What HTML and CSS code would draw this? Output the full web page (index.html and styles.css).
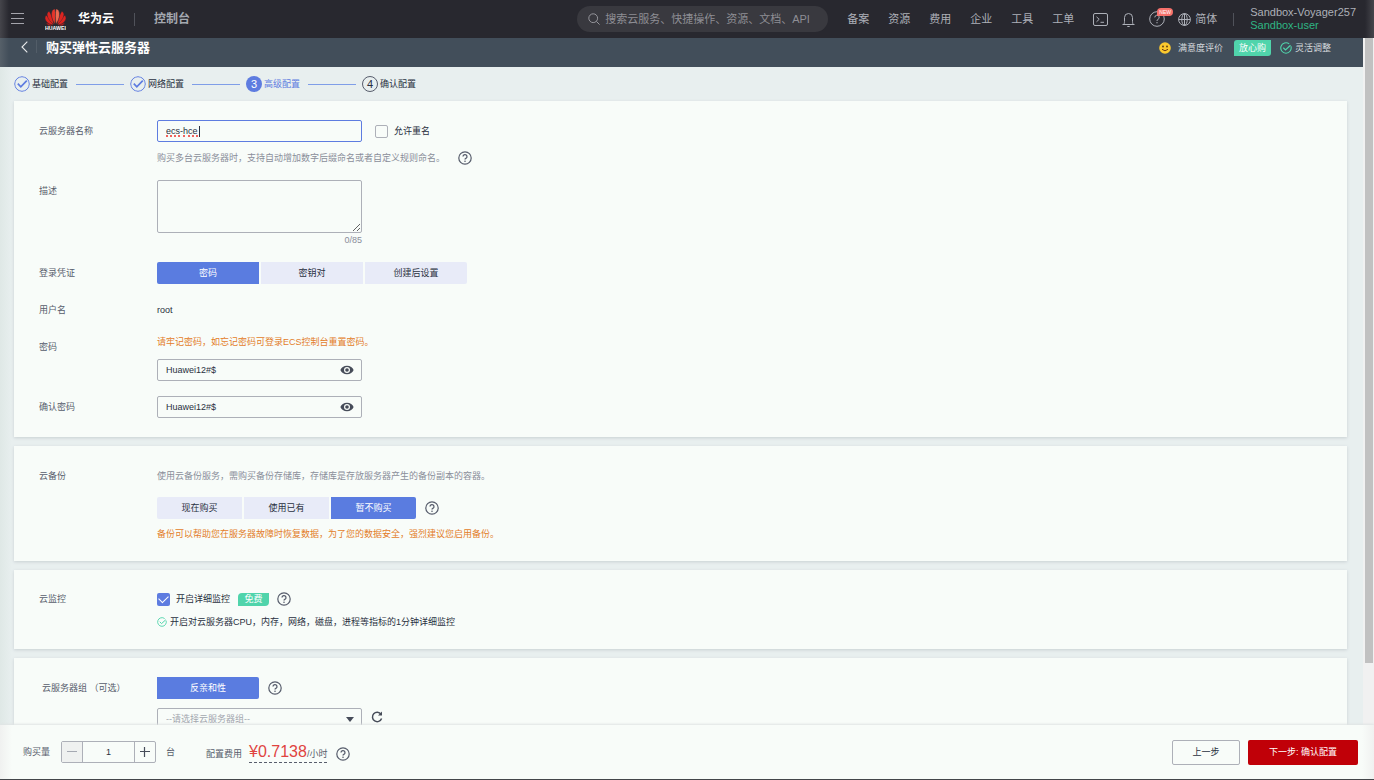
FILE: index.html
```html
<!DOCTYPE html>
<html lang="zh-CN">
<head>
<meta charset="utf-8">
<title>购买弹性云服务器</title>
<link rel="stylesheet" href="styles.css">
</head>
<body>
<svg class="defs" aria-hidden="true">
  <symbol id="help" viewBox="0 0 14 14"><circle cx="7" cy="7" r="6.2" fill="none" stroke="currentColor" stroke-width="1.2"/><path d="M5 5.6a2 2 0 1 1 2.9 1.8c-.7.35-.9.6-.9 1.2" fill="none" stroke="currentColor" stroke-width="1.3"/><circle cx="7" cy="10.3" r=".8" fill="currentColor"/></symbol>
  <symbol id="eye" viewBox="0 0 14 10"><path d="M7 .8C3.800.8 1.300 2.600.4 5c.9 2.400 3.400 4.200 6.600 4.200S12.700 7.400 13.600 5C12.700 2.600 10.200.8 7 .8z" fill="currentColor"/><circle cx="7" cy="5" r="3" fill="#f8fcf9"/><circle cx="7" cy="5" r="1.800" fill="currentColor"/></symbol>
  <symbol id="done" viewBox="0 0 16 16"><circle cx="8" cy="8" r="7.300" fill="none" stroke="currentColor" stroke-width="1"/><path d="M3.800 7.600l3 3.200 6-6.200" fill="none" stroke="currentColor" stroke-width="1.700"/></symbol>
  <symbol id="okay" viewBox="0 0 12 12"><path d="M10.900 4.300A5.200 5.200 0 1 1 9.200 1.900" fill="none" stroke="currentColor" stroke-width="1.100"/><path d="M3.300 5.800l2.200 2.100 5-4.600" fill="none" stroke="currentColor" stroke-width="1.200"/></symbol>
</svg>

<header class="topbar">
  <button class="icon-btn" aria-label="菜单"><svg width="13" height="12" viewBox="0 0 13 12"><path d="M0 .5h13M0 5.500h13M0 10.500h13" stroke="#a4a4ac"/></svg></button>
  <a class="brand" href="#">
    <svg class="logo" viewBox="0 0 40 44" role="img" aria-label="HUAWEI">
      <g fill="#dc2420" stroke="#28282f" stroke-width=".8">
        <path d="M14 33c-4 2-10 1-12-5 4 1 9 3 12 5zM26 33c4 2 10 1 12-5-4 1-9 3-12 5z" fill="#b81d1c"/>
        <path d="M16 32C10 33 1 27 0 20c0-3 1-5 2-6 5 4 11 11 14 18z"/>
        <path d="M24 32c6 1 15-5 16-12 0-3-1-5-2-6-5 4-11 11-14 18z"/>
        <path d="M17 31C12 29 4 20 4 12c0-3 2-5 4-6 4 6 7 16 9 25z"/>
        <path d="M23 31c5-2 13-11 13-19 0-3-2-5-4-6-4 6-7 16-9 25z"/>
        <path d="M19 31C14 24 10 12 14 5c2-3 4-3 5-3 2 8 1 20 0 29z" fill="#e4352a"/>
        <path d="M21 31c5-7 9-19 5-26-2-3-4-3-5-3-2 8-1 20 0 29z" fill="#ee6a50"/>
      </g>
      <text x="20" y="43" text-anchor="middle" class="logo-word">HUAWEI</text>
    </svg>
    <strong>华为云</strong>
  </a>
  <i class="bar"></i>
  <a class="console" href="#">控制台</a>
  <div class="tools">
    <label class="search">
      <svg width="12" height="12" viewBox="0 0 12 12" fill="none" stroke="#96969c"><circle cx="5.200" cy="5.200" r="4.400"/><path d="M8.400 8.400l3.200 3.200"/></svg>
      <input type="text" aria-label="搜索" placeholder="搜索云服务、快捷操作、资源、文档、API">
    </label>
    <nav class="nav"><a href="#">备案</a><a href="#">资源</a><a href="#">费用</a><a href="#">企业</a><a href="#">工具</a><a href="#">工单</a></nav>
    <div class="icons">
      <button class="icon-btn" aria-label="终端"><svg width="15" height="13" viewBox="0 0 15 13" fill="none" stroke="currentColor"><rect x=".5" y=".5" width="14" height="12" rx="1.500"/><path d="M3.500 3.800l2.700 2.500-2.700 2.500M7.500 9.300h3.500"/></svg></button>
      <button class="icon-btn" aria-label="通知"><svg width="13" height="15" viewBox="0 0 13 15" fill="none" stroke="currentColor"><path d="M.5 12.500h12M1.800 12.500c.7-1.200.7-2.500.7-4.500V5.500a4 4 0 0 1 8 0V8c0 2 0 3.300.7 4.500M5.300 14.500h2.400"/></svg></button>
      <button class="icon-btn help-new" aria-label="帮助"><svg width="16" height="16" viewBox="0 0 16 16" fill="none" stroke="currentColor"><circle cx="8" cy="8" r="7.300"/><path d="M5.800 6.400a2.200 2.200 0 1 1 3.200 2c-.8.4-1 .7-1 1.500M8 11v1.300"/></svg><span class="new">NEW</span></button>
    </div>
    <button class="icon-btn lang"><svg width="13" height="13" viewBox="0 0 13 13" fill="none" stroke="currentColor"><circle cx="6.500" cy="6.500" r="5.900"/><ellipse cx="6.500" cy="6.500" rx="2.700" ry="5.900"/><path d="M.6 6.500h11.800M6.500.6v11.800"/></svg>简体</button>
    <i class="bar"></i>
    <div class="account"><span>Sandbox-Voyager257</span><span class="user">Sandbox-user</span></div>
  </div>
</header>

<div class="viewport">
  <main class="page">
    <div class="titlebar">
      <button class="icon-btn back" aria-label="返回"><svg width="7" height="12" viewBox="0 0 7 12"><path d="M6.300.7L1 6l5.300 5.300" fill="none" stroke="#e8eaec" stroke-width="1.100"/></svg></button>
      <h1>购买弹性云服务器</h1>
      <div class="promos">
        <a href="#"><svg width="12" height="12" viewBox="0 0 12 12"><circle cx="6" cy="6" r="5.800" fill="#fbc92e"/><circle cx="4" cy="4.500" r=".9" fill="#5a3a10"/><circle cx="8" cy="4.500" r=".9" fill="#5a3a10"/><path d="M3 7.300q3 3 6 0" fill="none" stroke="#6b3a12"/></svg>满意度评价</a>
        <span class="tag">放心购</span>
        <span class="flex-tip"><svg width="12" height="12"><use href="#okay"/></svg>灵活调整</span>
      </div>
    </div>

    <ol class="steps">
      <li><svg class="dot" aria-hidden="true"><use href="#done"/></svg><span class="step-name">基础配置</span><i class="line"></i></li>
      <li><svg class="dot" aria-hidden="true"><use href="#done"/></svg><span class="step-name">网络配置</span><i class="line"></i></li>
      <li class="current"><b class="dot">3</b><span class="step-name">高级配置</span><i class="line"></i></li>
      <li class="todo"><b class="dot">4</b><span class="step-name">确认配置</span></li>
    </ol>

    <form class="cards">
      <section class="card basic">
        <div class="row name-row">
          <label class="label" for="name">云服务器名称</label>
          <div>
            <div class="inline">
              <div class="field"><input class="focused" id="name" type="text" value="ecs-hce"><i class="squiggle"></i><i class="squiggle second"></i><i class="caret"></i></div>
              <label class="check"><input type="checkbox">允许重名</label>
            </div>
            <p class="hint spaced">购买多台云服务器时，支持自动增加数字后缀命名或者自定义规则命名。<svg class="help"><use href="#help"/></svg></p>
          </div>
        </div>
        <div class="row desc-row">
          <label class="label" for="desc">描述</label>
          <div class="desc"><textarea id="desc"></textarea><span class="count">0/85</span></div>
        </div>
        <div class="row">
          <span class="label">登录凭证</span>
          <div class="segments"><button type="button" class="on">密码</button><button type="button">密钥对</button><button type="button">创建后设置</button></div>
        </div>
        <div class="row user-row"><span class="label">用户名</span><span class="value">root</span></div>
        <div class="row pwd-row">
          <label class="label" for="pwd">密码</label>
          <div>
            <p class="warn">请牢记密码，如忘记密码可登录ECS控制台重置密码。</p>
            <div class="field"><input id="pwd" type="text" value="Huawei12#$"><button type="button" class="eye" aria-label="显示密码"><svg width="14" height="10"><use href="#eye"/></svg></button></div>
          </div>
        </div>
        <div class="row">
          <label class="label" for="pwd2">确认密码</label>
          <div class="field"><input id="pwd2" type="text" value="Huawei12#$"><button type="button" class="eye" aria-label="显示密码"><svg width="14" height="10"><use href="#eye"/></svg></button></div>
        </div>
      </section>

      <section class="card backup">
        <div class="row">
          <span class="label short">云备份</span>
          <div>
            <p class="hint">使用云备份服务，需购买备份存储库，存储库是存放服务器产生的备份副本的容器。</p>
            <div class="inline tight">
              <div class="segments small"><button type="button">现在购买</button><button type="button">使用已有</button><button type="button" class="on">暂不购买</button></div>
              <svg class="help"><use href="#help"/></svg>
            </div>
            <p class="warn">备份可以帮助您在服务器故障时恢复数据，为了您的数据安全，强烈建议您启用备份。</p>
          </div>
        </div>
      </section>

      <section class="card monitor">
        <div class="row">
          <span class="label short">云监控</span>
          <div>
            <div class="inline monitor-line">
              <label class="check"><input type="checkbox" checked>开启详细监控</label>
              <span class="free">免费</span>
              <svg class="help"><use href="#help"/></svg>
            </div>
            <p class="benefit"><svg width="10" height="10"><use href="#okay"/></svg>开启对云服务器CPU，内存，网络，磁盘，进程等指标的1分钟详细监控</p>
          </div>
        </div>
      </section>

      <section class="card group">
        <div class="row">
          <label class="label optional" for="group">云服务器组 （可选）</label>
          <div>
            <div class="inline tight"><div class="segments"><button type="button" class="on">反亲和性</button></div><svg class="help"><use href="#help"/></svg></div>
            <div class="inline tight select-line">
              <div class="field"><select id="group"><option>--请选择云服务器组--</option></select><svg class="arrow" viewBox="0 0 8 5"><path d="M0 0h8L4 5z" fill="#464c59"/></svg></div>
              <button type="button" class="icon-btn" aria-label="刷新"><svg width="12" height="12" viewBox="0 0 12 12"><path d="M10 3.200A4.700 4.700 0 1 0 10.600 7.500" fill="none" stroke="#464c59" stroke-width="1.500"/><path d="M11 .5v4H7z" fill="#464c59"/></svg></button>
            </div>
          </div>
        </div>
      </section>
    </form>
  </main>
  <div class="scroll"><div class="thumb"></div></div>
</div>

<footer class="footer">
  <label for="qty">购买量</label>
  <div class="qty">
    <button class="minus" aria-label="减少"><svg width="12" height="12" viewBox="0 0 12 12"><path d="M1 5.500h10" stroke="#a5a9b2"/></svg></button>
    <input id="qty" type="text" value="1">
    <button aria-label="增加"><svg width="12" height="12" viewBox="0 0 12 12"><path d="M1 5.500h10M5.500 1v10" stroke="#464c59" stroke-width="1.200"/></svg></button>
  </div>
  <span>台</span>
  <span class="fee">配置费用</span>
  <span class="price"><b>¥0.7138</b>/小时</span>
  <svg class="help"><use href="#help"/></svg>
  <button class="prev">上一步</button>
  <button class="next">下一步: 确认配置</button>
</footer>
</body>
</html>
```
FILE: styles.css
```css
* { box-sizing: border-box; }

body {
  margin: 0;
  height: 100vh;
  display: flex;
  flex-direction: column;
  overflow: hidden;
  background: #e8efef;
  color: #293040;
  font: 9px/16px "Liberation Sans", "Noto Sans CJK SC", sans-serif;
}

button, input, textarea, select { font: inherit; color: inherit; margin: 0; }
button { padding: 0; border: 0; cursor: pointer; }
a { color: inherit; text-decoration: none; }
p { margin: 0; }
svg { flex: none; }
.defs { position: absolute; width: 0; height: 0; }
.icon-btn { display: flex; align-items: center; background: none; }

/* Top bar */
.topbar {
  flex: none;
  height: 38px;
  display: flex;
  align-items: center;
  padding: 0 18px 0 11px;
  background: linear-gradient(90deg, #45454b, #28282f 9px, #28282f calc(100% - 9px), #45454b);
  color: #adb0b8;
  font-size: 11px;
}
.brand { display: flex; align-items: center; gap: 12px; margin-left: 21px; color: #fff; font-size: 12px; }
.logo { width: 21px; height: 23px; }
.logo-word { font: bold 10px "Liberation Sans", sans-serif; fill: #fff; }
.bar { width: 1px; height: 13px; background: #50525a; }
.brand + .bar { margin: 0 19px 0 20px; }
.console { font-size: 12px; font-weight: bold; color: #a4a8b0; }
.tools { margin-left: auto; display: flex; align-items: center; }
.search {
  width: 251px;
  height: 26px;
  display: flex;
  align-items: center;
  gap: 5px;
  padding: 0 11px;
  border-radius: 13px;
  background: #39393f;
}
.search input { flex: 1; min-width: 0; padding: 0; border: 0; background: none; }
.search input::placeholder { color: #8e8e94; opacity: 1; }
.nav { display: flex; gap: 19px; margin-left: 19px; }
.icons { display: flex; align-items: center; gap: 14px; margin-left: 19px; }
.help-new { position: relative; }
.new {
  position: absolute;
  left: 8px;
  top: -3px;
  width: 16px;
  border-radius: 4px 4px 4px 0;
  background: #f5706b;
  color: #fff;
  font-size: 5px;
  line-height: 8px;
}
.lang { gap: 4px; margin-left: 13px; }
.lang + .bar { margin: 0 16px; }
.account { display: flex; flex-direction: column; line-height: 13px; }
.user { color: #2fb584; }

/* Scrolling area */
.viewport { flex: 1; min-height: 0; display: flex; overflow: hidden; }
.page { flex: 1; min-width: 0; background: linear-gradient(90deg, #dfe8e6, #e8efef 12px); }
.scroll { width: 11px; padding: 0 1px 0 2px; background: #f1f1f1; }
.thumb { height: 91%; background: #c1c1c1; }

.titlebar {
  height: 29px;
  display: flex;
  align-items: flex-start;
  padding: 2px 32px 0 21px;
  background: linear-gradient(90deg, #566069, #424e5a 9px);
  color: #d5d9dd;
}
.back { height: 13px; padding-right: 8px; border-right: 1px solid #525d68; }
h1 { margin: 0 0 0 9px; font-size: 13px; line-height: 16px; color: #fff; }
.promos { margin-left: auto; display: flex; align-items: center; gap: 9px; }
.promos a { display: flex; align-items: center; gap: 7px; }
.tag { padding: 0 5px; border-radius: 3px 0 3px 0; background: #50d4ab; color: #fff; }
.flex-tip { display: flex; align-items: center; gap: 3px; }
.flex-tip svg, .benefit svg { color: #50d4ab; }
.promos a { margin-right: 2px; }

.steps { height: 34px; display: flex; align-items: center; margin: 0; padding: 0 14px; list-style: none; }
.steps li { display: flex; align-items: center; }
.dot { width: 16px; height: 16px; border-radius: 50%; color: #5e7ce0; text-align: center; font: 11px/16px "Liberation Sans", sans-serif; }
.step-name { min-width: 38px; margin-left: 2px; }
.line { width: 48px; height: 1px; margin: 0 6px; background: #7f9ee8; }
.current { color: #5e7ce0; }
.current .dot { background: #5e7ce0; color: #fff; }
.todo .dot { border: 1px solid #575d6c; color: #293040; line-height: 14px; }

/* Cards */
.cards { display: flex; flex-direction: column; gap: 9px; padding: 0 16px 0 14px; }
.card { padding: 19px 25px; background: #f8fcf9; box-shadow: 0 1px 3px #c9d0d3; }
.basic { display: flex; flex-direction: column; gap: 15px; }
.row { display: grid; grid-template-columns: 118px 1fr; align-items: start; }
.label { line-height: 22px; color: #575d6c; }
.short { line-height: 16px; }
.optional { padding-left: 3px; }
.name-row { margin-bottom: -1px; }
.user-row { margin-bottom: -2px; }
.pwd-row .label { padding-top: 2px; }
.value { line-height: 22px; }

.inline { display: flex; align-items: center; gap: 13px; }
.tight { gap: 9px; }
.field { position: relative; width: 205px; height: 22px; }
.field input, .field select, textarea {
  display: block;
  width: 100%;
  height: 100%;
  padding: 0 8px;
  border: 1px solid #adb0b8;
  border-radius: 2px;
  background: transparent;
  outline: 0;
}
.field .focused { border-color: #5e7ce0; }
.squiggle {
  position: absolute;
  left: 9px;
  top: 15px;
  width: 14px;
  border-bottom: 2px dotted #f0625d;
}
.second { left: 26px; width: 15px; }
.caret { position: absolute; left: 42px; top: 6px; width: 1px; height: 11px; background: #293040; }
.field select { appearance: none; color: #a2a6ae; }
.arrow { position: absolute; right: 8px; top: 9px; width: 8px; height: 5px; }
.eye { position: absolute; right: 8px; top: 6px; width: 14px; height: 10px; display: flex; background: none; color: #464c59; }

.check { display: flex; align-items: center; gap: 6px; }
.check input { appearance: none; width: 13px; height: 13px; border: 1px solid #adb0b8; border-radius: 2px; }
.check input:checked {
  border: 0;
  background: #5e7ce0;
  display: grid;
  place-items: center;
}
.check input:checked::before { content: ""; width: 8px; height: 5px; margin-top: -2px; border: solid #fff; border-width: 0 0 1px 1px; rotate: -45deg; }

.hint { display: flex; align-items: center; gap: 13px; color: #8a8e99; }
.spaced { margin-top: 8px; }
.help { width: 14px; height: 14px; color: #575d6c; }
.warn { color: #e37d29; }
.pwd-row .field { margin-top: 9px; }
.desc { width: 205px; display: flex; flex-direction: column; }
.desc textarea { height: 53px; }
.count { text-align: right; line-height: 14px; color: #8a8e99; }

.segments { display: flex; gap: 2px; }
.segments button { width: 102px; height: 22px; background: #e8ebf8; }
.segments .on { background: #5a7ce0; color: #fff; }
.segments button:first-child { border-radius: 2px 0 0 2px; }
.segments button:last-child { border-radius: 0 2px 2px 0; }
.small button { width: 85px; }

.backup { padding-top: 22px; }
.backup .inline { margin: 13px 0 7px; }
.monitor { padding-top: 21px; }
.monitor-line { gap: 8px; }
.free { width: 31px; border-radius: 4px 0 4px 0; background: #50d4ab; color: #fff; line-height: 13px; text-align: center; }
.benefit { display: flex; align-items: center; gap: 3px; margin-top: 7px; }
.select-line { margin-top: 9px; align-items: flex-start; }
.select-line .icon-btn { padding-top: 3px; }

/* Footer */
.footer {
  position: relative;
  flex: none;
  height: 55px;
  display: flex;
  align-items: center;
  padding: 0 16px 0 23px;
  border-bottom: 1px solid #43464a;
  background: linear-gradient(90deg, #f0f1f0, #f8fcf9 12px, #f8fcf9 calc(100% - 12px), #f0f1f0);
  box-shadow: 0 -1px 2px #dfe3e4;
  color: #575d6c;
}
.qty { width: 95px; height: 22px; display: flex; margin: 0 10px 0 11px; border: 1px solid #adb0b8; border-radius: 2px; }
.qty button { width: 20px; display: grid; place-items: center; background: none; }
.qty .minus { background: #eff1f0; }
.qty input { flex: 1; min-width: 0; padding: 0; border: solid #adb0b8; border-width: 0 1px; background: none; text-align: center; color: #293040; }
.fee { margin: 3px 7px 0 31px; }
.price { margin: 2px 9px 0 0; border-bottom: 1px dashed #575d6c; line-height: 15px; }
.price b { font-size: 16px; font-weight: normal; color: #e0433f; }
.footer .help { margin-top: 3px; }
.prev, .next { height: 25px; border-radius: 2px; }
.prev { width: 68px; margin-left: auto; border: 1px solid #adb0b8; background: transparent; color: #293040; }
.next { width: 110px; margin-left: 8px; background: #c00008; color: #fff; }
```
